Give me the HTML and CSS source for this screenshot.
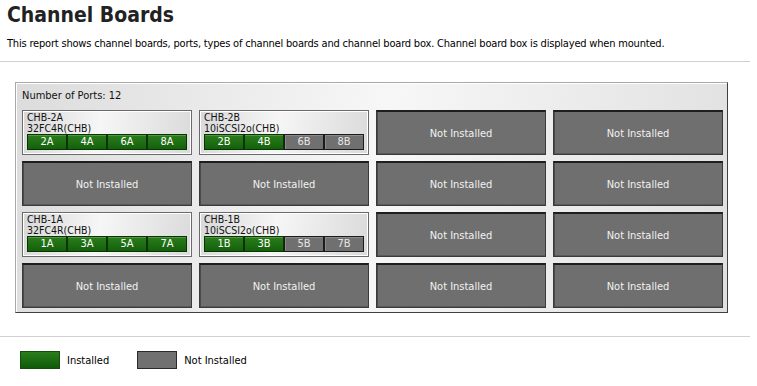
FILE: index.html
```html
<!DOCTYPE html>
<html lang="en">
<head>
    <meta charset="UTF-8">
    <meta name="viewport" content="width=device-width, initial-scale=1.0">
    <title>Channel Boards</title>
    <link rel="stylesheet" href="styles.css">
</head>
<body>
    <header class="page-head">
        <h1>Channel Boards</h1>
        <p class="desc">This report shows channel boards, ports, types of channel boards and channel board box. Channel board box is displayed when mounted.</p>
    </header>
    <hr class="rule">

    <div class="panel">
        <div class="panel-title">Number of Ports: 12</div>
        <div class="grid">
            <div class="board">
                <div class="board-name">CHB-2A<br>32FC4R(CHB)</div>
                <div class="ports">
                    <span class="port on">2A</span>
                    <span class="port on">4A</span>
                    <span class="port on">6A</span>
                    <span class="port on">8A</span>
                </div>
            </div>
            <div class="board">
                <div class="board-name">CHB-2B<br>10iSCSI2o(CHB)</div>
                <div class="ports">
                    <span class="port on">2B</span>
                    <span class="port on">4B</span>
                    <span class="port off">6B</span>
                    <span class="port off">8B</span>
                </div>
            </div>
            <div class="slot">Not Installed</div>
            <div class="slot">Not Installed</div>

            <div class="slot">Not Installed</div>
            <div class="slot">Not Installed</div>
            <div class="slot">Not Installed</div>
            <div class="slot">Not Installed</div>

            <div class="board">
                <div class="board-name">CHB-1A<br>32FC4R(CHB)</div>
                <div class="ports">
                    <span class="port on">1A</span>
                    <span class="port on">3A</span>
                    <span class="port on">5A</span>
                    <span class="port on">7A</span>
                </div>
            </div>
            <div class="board">
                <div class="board-name">CHB-1B<br>10iSCSI2o(CHB)</div>
                <div class="ports">
                    <span class="port on">1B</span>
                    <span class="port on">3B</span>
                    <span class="port off">5B</span>
                    <span class="port off">7B</span>
                </div>
            </div>
            <div class="slot">Not Installed</div>
            <div class="slot">Not Installed</div>

            <div class="slot">Not Installed</div>
            <div class="slot">Not Installed</div>
            <div class="slot">Not Installed</div>
            <div class="slot">Not Installed</div>
        </div>
    </div>

    <hr class="rule rule-low">

    <!-- legend for the box colours -->
    <div class="legend">
        <span class="swatch on"></span>
        <span class="legend-text">Installed</span>
        <span class="swatch off"></span>
        <span class="legend-text">Not Installed</span>
    </div>
</body>
</html>
```

FILE: styles.css
```css
body {
    margin: 0;
    background: #fff;
    font-family: "DejaVu Sans Condensed", "DejaVu Sans", sans-serif;
    font-stretch: condensed;
    font-size: 11px;
    color: #000;
}

.page-head {
    padding: 0 7px;
}

h1 {
    margin: 0;
    padding-top: 2px;
    font-size: 21px;
    line-height: 26px;
    color: #222;
}

.desc {
    margin: 9px 0 0 0;
    line-height: 14px;
    letter-spacing: -0.19px;
}

.rule {
    width: 750px;
    margin: 10px 0 0 0;
    border: none;
    border-top: 1px solid #d0d0cc;
}

/* big grey frame around the slots */
.panel {
    width: 701px;
    margin: 20px 0 0 15px;
    padding: 6px 4px 4px 6px;
    border: 1px solid #404040;
    border-top-color: #a8a8a8;
    border-left-color: #a8a8a8;
    box-shadow: inset 1px 1px 0 #fff;
    background: linear-gradient(100deg, #dcdcdc 0%, #f7f7f7 50%, #e0e0e0 100%);
}

.panel-title {
    line-height: 14px;
    margin-bottom: 7px;
    color: #111;
}

.grid {
    display: grid;
    grid-template-columns: repeat(4, 170px);
    grid-auto-rows: 45px;
    gap: 6px 7px;
}

.board {
    box-sizing: border-box;
    padding: 1px 4px 0 4px;
    border: 1px solid #6a6a6a;
    box-shadow: inset 1px 1px 0 #fff, inset -1px -1px 0 #fff;
    background: linear-gradient(100deg, #d8d8d8 0%, #f6f6f6 45%, #dadada 100%);
}

.board-name {
    height: 22px;
    font-size: 10.5px;
    line-height: 11px;
    color: #111;
    overflow: hidden;
}

.ports {
    display: flex;
}

.port {
    box-sizing: border-box;
    width: 40px;
    height: 16px;
    line-height: 14px;
    text-align: center;
    color: #fff;
    border: 1px solid #1b1b1b;
}

.port.on {
    border-color: #0c3306;
    background: linear-gradient(#2a7d1c, #14600b);
    box-shadow: inset 0 1px 0 #4f9a40;
}

.port.off {
    color: #e6e6e6;
    background: #707070;
    box-shadow: inset 1px 1px 0 #8a8a8a;
}

.slot {
    box-sizing: border-box;
    display: flex;
    align-items: center;
    justify-content: center;
    color: #f2f2f2;
    background: #6f6f6f;
    border: 1px solid #3a3a3a;
    border-top: 2px solid #1e1e1e;
    box-shadow: inset 1px 0 0 #4a4a4a, inset 0 -1px 0 #5a5a5a;
}

.rule-low {
    margin-top: 23px;
}

.legend {
    display: flex;
    align-items: center;
    padding: 14px 0 0 20px;
}

.swatch {
    box-sizing: border-box;
    width: 40px;
    height: 18px;
    margin-right: 7px;
}

.swatch.on {
    border: 1px solid #174d0c;
    background: linear-gradient(#2a7d1c, #0f5a08);
}

.swatch.off {
    border: 1px solid #2a2a2a;
    background: #707070;
}

.legend-text {
    margin-right: 28px;
}
```
